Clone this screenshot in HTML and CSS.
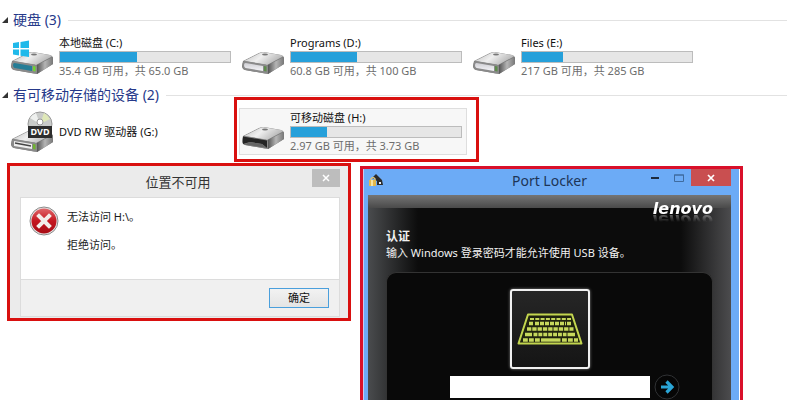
FILE: index.html
```html
<!DOCTYPE html>
<html lang="zh-CN">
<head>
    <meta charset="UTF-8">
    <meta name="viewport" content="width=device-width, initial-scale=1.0">
    <title>Port Locker</title>
    <link rel="stylesheet" href="styles.css">
</head>
<body>
    <svg class="defs" aria-hidden="true">
        <defs>
            <linearGradient id="top" x1="0" y1="0" x2="1" y2="0.4">
                <stop offset="0" stop-color="#bdbdbd"/>
                <stop offset="0.5" stop-color="#efefef"/>
                <stop offset="1" stop-color="#b4b4b4"/>
            </linearGradient>
            <linearGradient id="side" x1="0" y1="0" x2="1" y2="0">
                <stop offset="0" stop-color="#555"/>
                <stop offset="0.5" stop-color="#b5b5b5"/>
                <stop offset="1" stop-color="#777"/>
            </linearGradient>
            <linearGradient id="front" x1="0" y1="0" x2="0" y2="1">
                <stop offset="0" stop-color="#cfcfd4"/>
                <stop offset="1" stop-color="#f4f4f8"/>
            </linearGradient>
            <linearGradient id="red" x1="0" y1="0" x2="0" y2="1">
                <stop offset="0" stop-color="#e0676a"/>
                <stop offset="0.5" stop-color="#c4161f"/>
                <stop offset="1" stop-color="#a80d16"/>
            </linearGradient>
            <g id="drive">
                <path d="M1 27 L17 19 Q19 18 22 18 L39 21 Q42 22 42 24 L42 30 L26 40 L3 36 Q0 35 0 32 Z" fill="#7b7b7b"/>
                <path d="M2 27 L18 19 Q20 18 23 18.500 L39 21 Q42 22 40 23 L25 31 Z" fill="url(#top)"/>
                <path d="M26 31 L42 23 L42 30 L26 40 Z" fill="url(#side)"/>
                <path d="M3 27 L24 30.500 Q26 31 26 33 L26 38 Q26 40 23 39.500 L3 36 Q0.500 35 0.500 31 Q0.500 27 3 27 Z" fill="#8a8a8a"/>
                <ellipse cx="23" cy="20.500" rx="3" ry="1" fill="#777"/>
            </g>
        </defs>
    </svg>

    <main class="explorer">
        <h2 class="group"><span class="arrow"></span>硬盘 (3)</h2>
        <div class="drives">
            <div class="drive">
                <svg class="icon" viewBox="0 0 44 44">
                    <use href="#drive"/>
                    <path d="M2 9 L8 8 V14 H2 Z M9.500 8 L18 6.500 V14 H9.500 Z M2 15.500 H8 V21.500 L2 20.500 Z M9.500 15.500 H18 V23 L9.500 21.700 Z" fill="#1fb9ea"/>
                    <path d="M3.500 29 L21 32 V37 L3.500 34 Q2 33.500 2 31 Q2 29 3.500 29 Z" fill="#267d96"/>
                    <path d="M22 32 L24.500 32.500 V37.500 L22 37 Z" fill="#6fd32f"/>
                </svg>
                <div class="info">
                    <div class="name">本地磁盘 (C:)</div>
                    <div class="bar"><div class="used" style="width: 45%"></div></div>
                    <div class="free">35.4 GB 可用，共 65.0 GB</div>
                </div>
            </div>
            <div class="drive">
                <svg class="icon" viewBox="0 0 44 44">
                    <use href="#drive"/>
                    <path d="M3.500 29 L21 32 V37 L3.500 34 Q2 33.500 2 31 Q2 29 3.500 29 Z" fill="url(#front)"/>
                    <path d="M22 32 L24.500 32.500 V37.500 L22 37 Z" fill="#5c8b4a"/>
                </svg>
                <div class="info">
                    <div class="name">Programs (D:)</div>
                    <div class="bar"><div class="used" style="width: 39%"></div></div>
                    <div class="free">60.8 GB 可用，共 100 GB</div>
                </div>
            </div>
            <div class="drive">
                <svg class="icon" viewBox="0 0 44 44">
                    <use href="#drive"/>
                    <path d="M3.500 29 L21 32 V37 L3.500 34 Q2 33.500 2 31 Q2 29 3.500 29 Z" fill="url(#front)"/>
                    <path d="M22 32 L24.500 32.500 V37.500 L22 37 Z" fill="#5c8b4a"/>
                </svg>
                <div class="info">
                    <div class="name">Files (E:)</div>
                    <div class="bar"><div class="used" style="width: 24%"></div></div>
                    <div class="free">217 GB 可用，共 285 GB</div>
                </div>
            </div>
        </div>

        <h2 class="group"><span class="arrow"></span>有可移动存储的设备 (2)</h2>
        <div class="drives">
            <div class="drive">
                <svg class="icon" viewBox="0 0 44 44">
                    <use href="#drive" y="3"/>
                    <path d="M3 32 L21 35 V40 L3 37 Z" fill="#eee"/>
                    <path d="M4 34 L20 37" stroke="#444" stroke-width="1.500"/>
                    <path d="M22 35 L24.500 35.500 V40.500 L22 40 Z" fill="#6fb32f"/>
                    <circle cx="29" cy="15" r="12" fill="#c9cbc9" stroke="#999"/>
                    <path d="M29 15 L19 9 A12 12 0 0 1 25 4 Z" fill="#eef0ee"/>
                    <path d="M29 15 L33 4 A12 12 0 0 1 39 10 Z" fill="#dfe8b8"/>
                    <circle cx="29" cy="13" r="3" fill="#fff" stroke="#999"/>
                    <path d="M17 17 H41 V29 H17 Z" fill="#2d2d2d"/>
                    <text class="disc" x="29" y="26" text-anchor="middle">DVD</text>
                </svg>
                <div class="info">
                    <div class="name">DVD RW 驱动器 (G:)</div>
                </div>
            </div>
            <div class="drive selected">
                <svg class="icon" viewBox="0 0 44 44">
                    <use href="#drive"/>
                    <path d="M1 27.500 L25 31.500 V39 L20 35 L8 33 L1 35 Z" fill="#252525"/>
                    <path d="M8 33 L20 35 L25 39 L2 35.500 Z" fill="#666"/>
                </svg>
                <div class="info">
                    <div class="name">可移动磁盘 (H:)</div>
                    <div class="bar"><div class="used" style="width: 21%"></div></div>
                    <div class="free">2.97 GB 可用，共 3.73 GB</div>
                </div>
            </div>
        </div>
    </main>

    <div class="windows">
        <section class="dialog">
            <header class="dialog-title">
                <h3>位置不可用</h3>
                <button class="dialog-close" aria-label="关闭">
                    <svg width="8" height="8" viewBox="0 0 8 8"><path d="M1 1 L7 7 M7 1 L1 7" stroke="#fff" stroke-width="1.500"/></svg>
                </button>
            </header>
            <div class="message">
                <svg width="30" height="30" viewBox="0 0 30 30">
                    <circle cx="15" cy="15" r="14" fill="#e8e4e4" stroke="#8b8b8b"/>
                    <circle cx="15" cy="15" r="12.500" fill="url(#red)"/>
                    <path d="M10 10 L20 20 M20 10 L10 20" stroke="#f3eeea" stroke-width="4" stroke-linecap="square"/>
                </svg>
                <div>
                    <p>无法访问 H:\。</p>
                    <p>拒绝访问。</p>
                </div>
            </div>
            <footer class="dialog-footer">
                <button class="ok">确定</button>
            </footer>
        </section>

        <section class="locker">
            <header class="locker-title">
                <svg class="app-icon" width="16" height="16" viewBox="0 0 16 16">
                    <path d="M4 5 L8 1 L14 7 L15 12 H9 V8 Z" fill="#2b2b2b"/>
                    <path d="M3 8 V6 Q5 3 7 6 V8" fill="none" stroke="#d8c27c" stroke-width="1.500"/>
                    <rect x="1" y="7" width="7" height="6" fill="#e3b84c"/>
                    <rect x="3" y="7" width="2" height="6" fill="#f7e3a0"/>
                    <rect x="11" y="9" width="2" height="2" fill="#eee"/>
                </svg>
                <h3>Port Locker</h3>
                <div class="controls">
                    <button class="min" aria-label="最小化"><svg width="8" height="3" viewBox="0 0 8 3"><path d="M0 1 H8 V3 H0 Z" fill="#1d2a3c"/></svg></button>
                    <button class="max" aria-label="最大化"><svg width="10" height="8" viewBox="0 0 10 8"><path d="M0.500 1 H9.500 V7.500 H0.500 Z M0 1 H10" fill="none" stroke="#3f6b9f"/></svg></button>
                    <button class="close" aria-label="关闭"><svg width="8" height="8" viewBox="0 0 8 8"><path d="M1 1 L7 7 M7 1 L1 7" stroke="#fff" stroke-width="1.700"/></svg></button>
                </div>
            </header>
            <div class="locker-body">
                <div class="brand"><span>lenovo</span></div>
                <h4>认证</h4>
                <p><label for="password">输入 Windows 登录密码才能允许使用 USB 设备。</label></p>
                <form class="auth">
                    <div class="keyboard">
                        <svg width="66" height="32" viewBox="0 0 66 32">
                            <path d="M11 1.500 H55 L64.500 30.500 H1.500 Z" fill="#20230f" stroke="#c3d64f" stroke-width="2" stroke-linejoin="round"/>
                            <g fill="none" stroke="#c6d85c">
                                <path d="M13 6 H54" stroke-width="2" stroke-dasharray="4 1.300"/>
                                <path d="M12 10.500 H16.500 M18 10.500 H49 M50 10.500 H55" stroke-width="3.400" stroke-dasharray="4 1"/>
                                <path d="M10 16 H56.500" stroke-width="3.400" stroke-dasharray="4.300 1"/>
                                <path d="M8 21.500 H15 M50.500 21.500 H58" stroke-width="3.400"/>
                                <path d="M16.500 21.500 H49.500" stroke-width="3.400" stroke-dasharray="3.900 1"/>
                                <path d="M6 27 H23 M45 27 H61" stroke-width="3.400" stroke-dasharray="4.800 1.200"/>
                                <path d="M24 27 H43.500" stroke-width="3.400"/>
                            </g>
                        </svg>
                    </div>
                    <div class="field">
                        <input type="password" id="password">
                        <button type="button" aria-label="登录">
                            <svg width="26" height="26" viewBox="0 0 26 26">
                                <circle cx="13" cy="13" r="12" fill="#060606" stroke="#303234"/>
                                <path d="M7 13 H18 M12.500 7.500 L18 13 L12.500 18.500" fill="none" stroke="#2aa5d6" stroke-width="3.200"/>
                            </svg>
                        </button>
                    </div>
                </form>
            </div>
        </section>
    </div>
</body>
</html>
```

FILE: styles.css
```css
* {
    box-sizing: border-box;
}

body {
    margin: 0;
    padding-top: 10px;
    min-height: 100vh;
    display: flex;
    flex-direction: column;
    background: #fff;
    color: #1a1a1a;
    font-family: "Noto Sans", "Noto Sans CJK SC", sans-serif;
    font-size: 11px;
    line-height: 16px;
}

h2, h3, h4, p {
    margin: 0;
    font-weight: normal;
}

button {
    border: 0;
    padding: 0;
    font: inherit;
    display: flex;
    align-items: center;
    justify-content: center;
}

.defs {
    position: absolute;
    width: 0;
    height: 0;
}

/* drive list */
.group {
    display: flex;
    align-items: center;
    height: 20px;
    margin-bottom: 3px;
    padding-left: 2px;
    color: #26398a;
    font-size: 14px;
    line-height: 20px;
}

.group::after {
    content: "";
    flex: 1;
    height: 1px;
    margin-left: 7px;
    background: #e2e2e2;
}

.arrow {
    border-left: 6px solid transparent;
    border-bottom: 6px solid #333;
    margin-right: 5px;
}

.drives {
    display: grid;
    grid-template-columns: repeat(auto-fill, 228px);
    gap: 3px;
    padding: 0 8px;
}

.drives + .group {
    margin-top: 5px;
}

.drive {
    position: relative;
    display: flex;
    gap: 4px;
    min-height: 47px;
    padding: 0 4px 0 2px;
    border: 1px solid transparent;
}

.icon {
    flex: none;
    width: 44px;
    height: 44px;
}

.disc {
    font-size: 9px;
    font-weight: bold;
    fill: #fff;
}

.info {
    flex: 1;
    display: flex;
    flex-direction: column;
    justify-content: center;
}

.name {
    color: #111;
}

.bar {
    height: 12px;
    border: 1px solid #bcbcbc;
    background: #e6e6e6;
}

.used {
    height: 100%;
    background: #26a0da;
}

.free {
    color: #6d6d6d;
}

.selected {
    border-color: #dedede;
    background: #f7f7f7;
}

/* red marker round the drive */
.selected::after {
    content: "";
    position: absolute;
    inset: -12px -13px -8px -6px;
    border: 3px solid #d9100f;
}

/* windows */
.windows {
    flex: 1;
    display: flex;
    align-items: flex-start;
    gap: 9px;
    padding: 8px 7px 0;
}

.dialog {
    flex: 0 1 344px;
    border: 3px solid #d9100f;
    padding: 3px 8px 1px 10px;
    background: #ebebeb;
}

.dialog-title {
    display: grid;
    grid-template-columns: 24px 1fr 28px;
    height: 28px;
}

.dialog-title h3 {
    grid-column: 2;
    text-align: center;
    font-size: 13px;
    line-height: 26px;
    color: #333;
}

.dialog-close {
    height: 18px;
    background: #bdbdbd;
}

.message {
    display: flex;
    gap: 8px;
    min-height: 83px;
    padding: 8px;
    border: 1px solid #dcdcdc;
    background: #fff;
}

.message p {
    margin: 3px 0 12px;
}

.dialog-footer {
    display: flex;
    justify-content: flex-end;
    padding: 8px 10px 8px;
    border: 1px solid #dcdcdc;
    border-top: 0;
    background: #f0f0f0;
}

.ok {
    width: 60px;
    height: 20px;
    border: 1px solid #4a9fdc;
    background: linear-gradient(#f2f2f2, #e4e4e4);
    color: #111;
}

/* port locker */
.locker {
    flex: 0 1 383px;
    align-self: stretch;
    display: flex;
    flex-direction: column;
    margin-top: 3px;
    padding: 0 9px 0 5px;
    border: 3px solid #d9102a;
    border-bottom: 0;
    background: #6cabf6;
    box-shadow: inset -1px 0 #fff, inset 1px 0 #c9c9ee;
}

.locker-title {
    display: grid;
    grid-template-columns: 88px 1fr 88px;
    height: 26px;
}

.app-icon {
    margin-top: 4px;
}

.locker-title h3 {
    text-align: center;
    font-size: 14px;
    line-height: 24px;
    color: #1d3557;
}

.controls {
    display: flex;
    justify-content: flex-end;
    height: 17px;
}

.controls button {
    width: 24px;
    background: none;
}

.controls .close {
    width: 40px;
    background: #c94f50;
}

.locker-body {
    flex: 1;
    padding: 0 18px;
    color: #f2f2f2;
    background:
        linear-gradient(#757575, #4a4a4a) 0 0 / 100% 13px no-repeat,
        linear-gradient(to right, #4a4c4e, transparent 50px),
        linear-gradient(to left, #4c4c4e, transparent 50px),
        #0c0c0c;
}

.brand {
    height: 34px;
    padding-top: 4px;
    text-align: right;
    font-family: "DejaVu Sans", sans-serif;
    font-size: 16px;
    font-weight: bold;
    font-style: italic;
    font-stretch: normal;
    line-height: 20px;
    color: #fff;
}

.brand span {
    display: inline-block;
    -webkit-box-reflect: below -9px linear-gradient(transparent 40%, rgba(255, 255, 255, 0.6));
}

.locker-body h4 {
    font-size: 12px;
    font-weight: bold;
    line-height: 16px;
}

.locker-body p {
    line-height: 16px;
}

.auth {
    display: flex;
    flex-direction: column;
    align-items: center;
    gap: 5px;
    height: calc(100% - 77px);
    min-height: 128px;
    margin-top: 11px;
    padding-top: 16px;
    border: 1px solid #333;
    border-bottom: 0;
    border-radius: 10px 10px 0 0;
    background: #090909;
}

.keyboard {
    flex: none;
    display: flex;
    align-items: center;
    justify-content: center;
    width: 80px;
    height: 80px;
    border: 2px solid #f0f0f0;
    border-radius: 3px;
    background: linear-gradient(#262626, #151515);
    box-shadow: 0 0 3px #888;
}

.field {
    display: grid;
    grid-template-columns: 30px 200px 30px;
    align-items: center;
}

.field input {
    grid-column: 2;
    height: 22px;
    border: 0;
    padding: 0 4px;
    background: #fff;
}

.field button {
    justify-content: flex-end;
    background: none;
}
```
